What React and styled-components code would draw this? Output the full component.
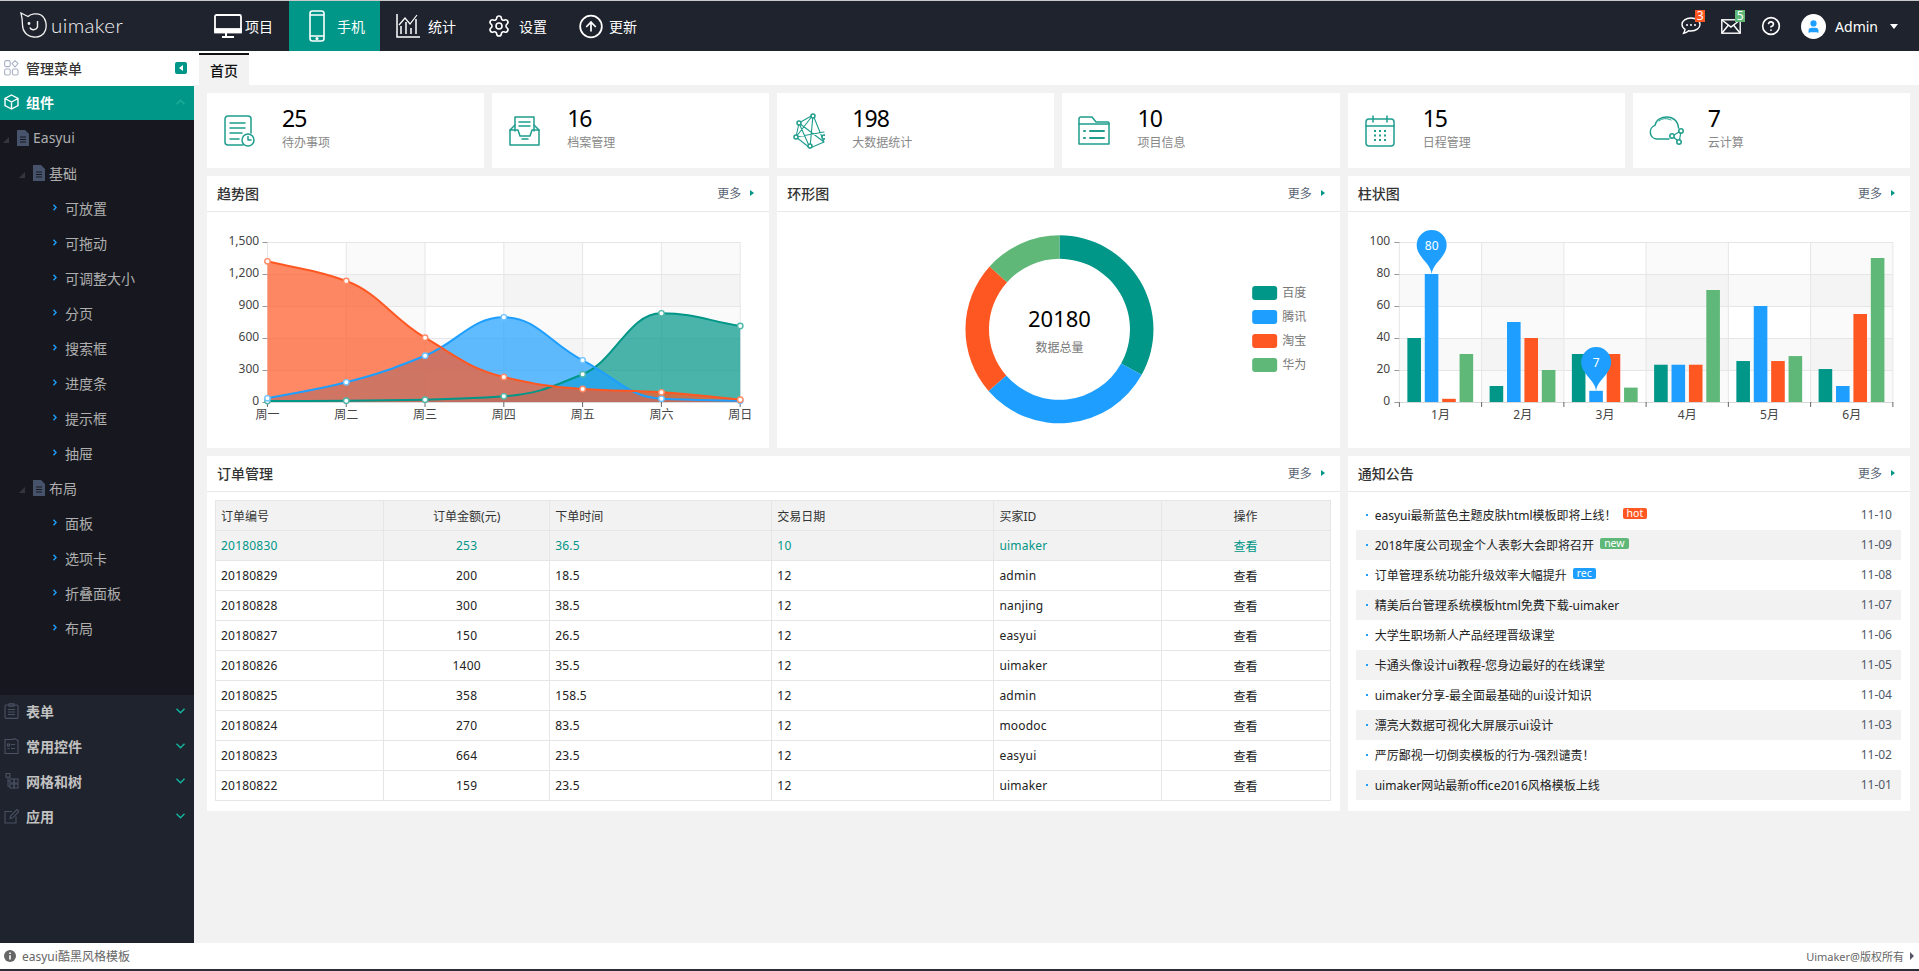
import React from 'react';
import styled, { createGlobalStyle } from 'styled-components';
import { Settings, CircleArrowUp, CircleHelp, User } from 'lucide-react';

const TEAL = '#009688', BLUE = '#1e9fff', ORANGE = '#ff5722', GREEN = '#5fb878';

const Global = createGlobalStyle`
  html, body { margin: 0; padding: 0; height: 100%; overflow: hidden; background: #f2f2f2; }
  #root { height: 100%; overflow: hidden; }
  * { box-sizing: border-box; }
  body { font-family: "Noto Sans", "Noto Sans CJK SC", sans-serif; font-size: 12px; color: #333; }
`;

const Page = styled.div`
  height: 971px; display: flex; flex-direction: column; border-top: 1px solid #c9c9c9; border-bottom: 2px solid #2a2e38;
`;
const TopBar = styled.header`
  height: 50px; flex: none; background: #1f232d; display: flex; align-items: stretch; color: #fff;
`;
const LogoArea = styled.div`
  width: 198px; flex: none; display: flex; align-items: center; padding: 0 0 2px 20px; gap: 3px;
`;
const LogoText = styled.span`
  font-family: Lato, sans-serif; font-weight: 300; font-size: 20.5px; letter-spacing: 0.4px; color: #f2f2f2;
`;
const Nav = styled.nav`display: flex;`;
const NavItem = styled.div`
  width: 91px; padding-left: 16px; display: flex; align-items: center; font-size: 14px; color: #fff;
  background: ${p => (p.$active ? TEAL : 'transparent')};
`;
const NavIcon = styled.span`
  width: ${p => p.$w}px; margin-right: ${p => p.$gap}px; flex: none; display: flex; justify-content: center;
`;
const TopRight = styled.div`margin-left: auto; display: flex; align-items: center; padding-right: 21px;`;
const TopIcon = styled.div`
  position: relative; width: 20px; height: 20px; margin-right: 20px; display: flex; align-items: center; justify-content: center;
`;
const Badge = styled.span`
  position: absolute; right: -4px; top: -6px; min-width: 10px; height: 12px; line-height: 12px; text-align: center;
  background: ${p => p.$bg}; color: #fff; font-size: 12px;
`;
const Avatar = styled.div`
  width: 25px; height: 25px; border-radius: 50%; background: #fff; display: flex; align-items: center; justify-content: center;
  margin-right: 9px;
`;
const AdminName = styled.span`font-size: 14px; color: #fff;`;
const Caret = styled.span`
  margin-left: 12px; width: 0; height: 0; border-left: 4px solid transparent; border-right: 4px solid transparent; border-top: 5px solid #fff;
`;

const Middle = styled.div`flex: 1; min-height: 0; display: flex;`;
const Sidebar = styled.aside`width: 194px; flex: none; background: #1f232d; display: flex; flex-direction: column;`;
const SideTitle = styled.div`
  height: 35px; flex: none; background: #fff; display: flex; align-items: center; padding: 0 7px 2px 4px;
  font-size: 14px; font-weight: 500; color: #333; gap: 7px;
`;
const Collapse = styled.span`
  margin-left: auto; width: 12px; height: 12px; border-radius: 2px; background: ${TEAL}; display: flex; align-items: center; justify-content: center;
  &::before { content: ""; border-right: 4px solid #fff; border-top: 3px solid transparent; border-bottom: 3px solid transparent; }
`;
const AccHead = styled.div`
  height: ${p => (p.$active ? 34 : 35)}px; flex: none; display: flex; align-items: center; padding: 0 9px 3px 4px; gap: 7px;
  font-size: 14px; font-weight: 700; color: ${p => (p.$active ? '#fff' : '#c2c2c2')};
  background: ${p => (p.$active ? TEAL : 'transparent')};
`;
const AccArrow = styled.svg`margin-left: auto; display: block;`;
const Tree = styled.div`height: 575px; flex: none; padding-top: 1.5px; background: #17181f; overflow: hidden;`;
const TreeRow = styled.div`
  height: 35px; display: flex; align-items: center; padding: 0 0 3px ${p => p.$indent}px; font-size: 14px; color: #aeaeae;
`;
const TreeTri = styled.span`
  width: 0; height: 0; margin-right: 8px; border-left: 6px solid transparent; border-bottom: 6px solid #34363d; margin-top: 4px;
`;
const DocIcon = styled.svg`margin-right: 4px; display: block;`;
const LeafArrow = styled.svg`margin-right: 8px; display: block;`;

const Main = styled.main`flex: 1; min-width: 0; display: flex; flex-direction: column;`;
const TabBar = styled.div`height: 34px; flex: none; background: #fff; padding: 2px 0 0 5px; display: flex;`;
const Tab = styled.div`
  width: 50px; border-top: 2px solid #111; background: #f2f2f2; display: flex; align-items: center; justify-content: center;
  font-size: 14px; font-weight: 500; color: #111;
`;
const Content = styled.div`
  flex: 1; padding: 8px 9px 0 13px; display: flex; flex-direction: column; gap: 8px;
`;
const StatRow = styled.div`display: grid; grid-template-columns: repeat(6, 1fr); gap: 8px;`;
const StatCard = styled.div`height: 75px; background: #fff; display: flex; align-items: center; padding-left: 16px;`;
const StatIcon = styled.div`width: 59px; flex: none; display: flex;`;
const StatNum = styled.div`font-size: 23px; height: 26px; line-height: 21px; letter-spacing: -1px; color: #000;`;
const StatLabel = styled.div`font-size: 12px; height: 20px; line-height: 18px; color: #888;`;
const ChartRow = styled.div`display: grid; grid-template-columns: repeat(3, 1fr); gap: 8px;`;
const Panel = styled.section`background: #fff; grid-column: span ${p => p.$span || 1};`;
const PanelHead = styled.div`
  height: 36px; border-bottom: 1px solid #e8e8e8; display: flex; align-items: center; padding: 0 15px 2px 10px;
`;
const PanelTitle = styled.h3`margin: 0; font-size: 14px; font-weight: 500; color: #333;`;
const More = styled.span`
  margin-left: auto; color: #5b6475; font-size: 12px; display: flex; align-items: center; gap: 9px;
  &::after { content: ""; border-left: 4px solid ${TEAL}; border-top: 3px solid transparent; border-bottom: 3px solid transparent; }
`;
const ChartSvg = styled.svg`
  display: block; width: 100%; height: 236px;
  text { font-family: "Noto Sans", "Noto Sans CJK SC", sans-serif; font-size: 12px; }
`;
const PanelBody = styled.div`padding: 8px 9px 10px 8px;`;
const OrderTable = styled.table`
  width: 100%; table-layout: fixed; border-collapse: collapse; font-size: 12px; color: #222;
`;
const Th = styled.th`
  height: 30px; padding: 0 5px; background: #f2f2f2; border: 1px solid #e6e6e6; font-weight: 400; color: #333;
  text-align: ${p => (p.$center ? 'center' : 'left')};
`;
const Td = styled.td`
  height: 30px; padding: 0 5px; border: 1px solid #e6e6e6; letter-spacing: 0.2px;
  text-align: ${p => (p.$center ? 'center' : 'left')};
  ${p => p.$hot && `background: #f2f2f2; color: ${TEAL};`}
`;
const NoticeList = styled.ul`list-style: none; margin: 0; padding: 0;`;
const NoticeItem = styled.li`
  height: 30px; display: flex; align-items: center; padding: 0 9px 1px 10px; color: #222;
  background: ${p => (p.$even ? '#f2f2f2' : '#fff')};
`;
const Dot = styled.i`width: 2px; height: 2px; background: ${BLUE}; margin-right: 7px; flex: none;`;
const Tag = styled.span`
  margin-left: 6px; height: 11px; line-height: 11px; padding: 0 4px; border-radius: 2px; font-size: 10.5px; color: #fff;
  background: ${p => p.$bg}; position: relative; top: -1px;
`;
const NoticeDate = styled.span`margin-left: auto; color: #4f5868;`;

const StatusBar = styled.footer`
  height: 26px; flex: none; background: #fff; display: flex; align-items: center; padding: 0 5px 0 4px; color: #666;
`;
const StatusLeft = styled.span`display: flex; align-items: center; gap: 6px;`;
const StatusRight = styled.span`margin-left: auto; display: flex; align-items: center; gap: 6px; color: #666; font-size: 11px;
  &::after { content: ""; border-left: 4px solid #556; border-top: 4px solid transparent; border-bottom: 4px solid transparent; }
`;

/* ---------- drawings ---------- */
const Logo = () => (
  <svg width="28" height="26" viewBox="0 0 28 26" fill="none" stroke="#f2f2f2" strokeWidth="1.3">
    <path d="M1 1 C3 2 6 3.5 8 4.5 C11 1.8 17 .8 21 3 C26 6 27 13 25.5 18 C24 23 19 25.5 14 25 C7 24.5 2.5 19.5 2.5 13 C2.5 9 2 5 1 1Z" />
    <path d="M10 15.5 C11 18.5 16 18.5 17.5 15 L17.5 9" strokeWidth="1.4" />
    <circle cx="9" cy="11.5" r=".8" fill="#f2f2f2" />
  </svg>
);
const IcoMonitor = () => (
  <svg width="28" height="24" viewBox="0 0 28 24" fill="none" stroke="#fff" strokeWidth="1.8">
    <rect x="1" y="1" width="26" height="17" rx="1.5" />
    <rect x="1" y="15" width="26" height="3.5" fill="#fff" />
    <path d="M12 19v3M8 23h12" strokeWidth="2" />
  </svg>
);
const IcoPhone = () => (
  <svg width="16" height="32" viewBox="0 0 16 32" fill="none" stroke="#fff" strokeWidth="1.6">
    <rect x="1" y="1" width="14" height="30" rx="2.5" />
    <path d="M1 5h14M1 26h14" />
    <circle cx="8" cy="28.5" r=".8" fill="#fff" />
  </svg>
);
const IcoStats = () => (
  <svg width="24" height="26" viewBox="0 0 24 26" fill="none" stroke="#fff" strokeWidth="1.5">
    <path d="M1 1v23h23" />
    <path d="M5 21v-8M10 21V9M15 21v-6M20 21V6" />
    <path d="M3 12l6-7 5 6 7-9" strokeWidth="1.2" />
  </svg>
);
const IcoChat = () => (
  <svg width="20" height="18" viewBox="0 0 20 18" fill="none" stroke="#fff" strokeWidth="1.4">
    <path d="M10 1C5 1 1 3.8 1 7.5c0 2 1.2 3.6 3 4.8-.2 1.4-.8 3-1.4 4 2-.4 3.8-1.4 5-2.5.8.1 1.6.2 2.4.2 5 0 9-2.8 9-6.5S15 1 10 1Z" />
    <circle cx="6" cy="8" r="1" fill="#fff" stroke="none" />
    <circle cx="10" cy="8" r="1" fill="#fff" stroke="none" />
    <circle cx="14" cy="8" r="1" fill="#fff" stroke="none" />
  </svg>
);
const IcoMail = () => (
  <svg width="20" height="15" viewBox="0 0 20 15" fill="none" stroke="#fff" strokeWidth="1.4">
    <rect x=".8" y=".8" width="18.4" height="13.4" />
    <path d="M1 1l9 7 9-7M1 14l6.5-8M19 14l-6.5-8" />
  </svg>
);
const SideGrid = () => (
  <svg width="15" height="16" viewBox="0 0 15 16" fill="none" stroke="#a9b1c4" strokeWidth="1.1">
    <rect x=".6" y=".6" width="5.6" height="6" rx="1.6" />
    <path d="M11 .6l3 3-3 3.4-3-3.4z" />
    <rect x=".6" y="9" width="5.6" height="6" rx="1.6" />
    <rect x="8.4" y="9" width="5.6" height="6" rx="1.6" />
  </svg>
);
const IcoBox = ({ c }) => (
  <svg width="15" height="16" viewBox="0 0 15 16" fill="none" stroke={c} strokeWidth="1.4">
    <path d="M7.5 1L14 4.5v7L7.5 15 1 11.5v-7zM1 4.5L7.5 8 14 4.5M7.5 8v7" />
  </svg>
);
const IcoClip = ({ c }) => (
  <svg width="15" height="16" viewBox="0 0 15 16" fill="none" stroke={c} strokeWidth="1.1">
    <rect x="1" y="2" width="13" height="13.4" rx="1" />
    <path d="M5 .8h5v2.4H5zM4 6.5h7M4 9h7M4 11.5h7" />
  </svg>
);
const IcoForm = ({ c }) => (
  <svg width="15" height="16" viewBox="0 0 15 16" fill="none" stroke={c} strokeWidth="1.1">
    <path d="M1 1.5h8l1.5-1 3.5 2v13H1z" />
    <path d="M3.5 6h2v2h-2zM3.5 10.5h2M7 6.5h4M7 10.5h4" />
  </svg>
);
const IcoTree = ({ c }) => (
  <svg width="15" height="16" viewBox="0 0 15 16" fill="none" stroke={c} strokeWidth="1.1">
    <rect x="2" y=".6" width="4" height="3.6" /><rect x="6" y="6" width="4" height="4" /><rect x="10" y="6" width="4" height="4" /><rect x="6" y="11" width="4" height="4" /><rect x="10" y="11" width="4" height="4" />
    <path d="M4 4.2v9h2M4 8h2" />
  </svg>
);
const IcoEdit = ({ c }) => (
  <svg width="15" height="16" viewBox="0 0 15 16" fill="none" stroke={c} strokeWidth="1.1">
    <path d="M12 8.5V15H1V3.5h7" />
    <path d="M6 10.5l.7-2.6L13 1.5 15 3.4 8.6 9.8z" />
  </svg>
);

const SI = ({ w = 32, h = 32, children }) => (
  <svg width={w} height={h} viewBox={`0 0 ${w} ${h}`} fill="none" stroke="#1f9d8d" strokeWidth="1.5" strokeLinecap="round" strokeLinejoin="round">{children}</svg>
);
const icons = [
  <SI key="a"><path d="M20 30H5a3 3 0 0 1-3-3V4a3 3 0 0 1 3-3h20a3 3 0 0 1 3 3v14" /><path d="M7 8h15M7 13h15M7 18h12M7 24h9" /><circle cx="25" cy="25" r="6" /><path d="M25 21.5V25h3" /></SI>,
  <SI key="b"><path d="M7 16V2h19v14" /><path d="M11 7h11M11 11h11" /><path d="M2 15l5-5M31 15l-5-5" /><path d="M2 15h8l2 6h10l2-6h7v15H2z" /><path d="M14 24h6" /></SI>,
  <SI key="c" h={36}><path d="M6 10L20 2l11 27-14 6-14-11zM6 10l-3 14M6 10l25 19M20 2L3 24M20 2l-3 33M3 24l28-5M6 10l11 25M20 2l11 27" strokeWidth="1.1" /><circle cx="6" cy="10" r="2" fill="#fff" /><circle cx="20" cy="3" r="2" fill="#fff" /><circle cx="3" cy="24" r="2" fill="#fff" /><circle cx="31" cy="24" r="2" fill="#fff" /><circle cx="17" cy="33" r="2" fill="#fff" /></SI>,
  <SI key="d" h={30}><path d="M1 27V3a2 2 0 0 1 2-2h11l4 5h12a1 1 0 0 1 1 1v21H1z" /><path d="M1 8h30" /><path d="M12 15h14M12 22h14M6 15h1M6 22h1" strokeWidth="2" /></SI>,
  <SI key="e"><rect x="2" y="4" width="28" height="27" rx="3" /><path d="M2 11h28M9 1v6M23 1v6" /><path d="M10 16h2M15 16h2M20 16h2M10 20.5h2M15 20.5h2M20 20.5h2M10 25h2M15 25h2M20 25h2" strokeWidth="2.2" strokeLinecap="butt" /></SI>,
  <SI key="f" w={36} h={30}><path d="M20 23H8a7 7 0 0 1-2-13.6C7 4 12 1 18 1c6 0 11 4 11.5 11" /><path d="M10 5c3-3 8-3 12-1" strokeWidth="1" /><circle cx="23" cy="20" r="2.2" /><circle cx="32" cy="15" r="2.2" /><circle cx="30" cy="26" r="2.2" /><path d="M25 19l5-3M25 21.5l3.5 3M31.7 17l-1.2 7" strokeWidth="1.2" /></SI>,
];

function monotone(pts) {
  const n = pts.length;
  const d = [];
  for (let i = 0; i < n - 1; i++) d.push((pts[i + 1][1] - pts[i][1]) / (pts[i + 1][0] - pts[i][0]));
  const m = pts.map((_, i) => {
    if (i === 0) return d[0];
    if (i === n - 1) return d[n - 2];
    if (d[i - 1] * d[i] <= 0) return 0;
    return (2 * d[i - 1] * d[i]) / (d[i - 1] + d[i]);
  });
  let s = `M${pts[0][0]} ${pts[0][1]}`;
  for (let i = 0; i < n - 1; i++) {
    const h = (pts[i + 1][0] - pts[i][0]) * 0.42;
    s += `C${pts[i][0] + h} ${pts[i][1] + m[i] * h} ${pts[i + 1][0] - h} ${pts[i + 1][1] - m[i + 1] * h} ${pts[i + 1][0]} ${pts[i + 1][1]}`;
  }
  return s;
}

const Bands = ({ x0, x1, cols }) => {
  const w = (x1 - x0) / cols;
  return (
    <g>
      {[1, 3].map(r => <rect key={r} x={x0} y={242 + r * 32} width={x1 - x0} height={32} fill="rgba(0,0,0,.025)" />)}
      {Array.from({ length: cols }).map((_, i) => i % 2 === 1 && <rect key={i} x={x0 + i * w} y={242} width={w} height={160} fill="rgba(0,0,0,.02)" />)}
      {[0, 1, 2, 3, 4].map(r => <path key={r} d={`M${x0} ${242.5 + r * 32}H${x1}`} stroke="#e6e6e6" />)}
      {Array.from({ length: cols + 1 }).map((_, i) => <path key={i} d={`M${x0 + i * w} 242V402`} stroke="#e6e6e6" />)}
      <path d={`M${x0} 402.5H${x1}`} stroke="#d8d8d8" />
      {Array.from({ length: cols + 1 }).map((_, i) => <path key={i} d={`M${x0 + i * w} 402V407`} stroke="#666" />)}
      {[0, 1, 2, 3, 4, 5].map(r => <path key={r} d={`M${x0 - 5} ${242.5 + r * 32}H${x0}`} stroke="#999" />)}
    </g>
  );
};

const LX0 = 267.3, LW = 78.8;
const lineSeries = [
  { c: TEAL, ring: '#4fb8a9', ys: [401, 400.7, 399.7, 396.3, 374.3, 313.3, 326] },
  { c: BLUE, ring: '#6fc2ff', ys: [398.3, 382.3, 355.7, 317.3, 360.3, 398.7, 400.7] },
  { c: ORANGE, ring: '#ff8a65', ys: [261.3, 281, 337.7, 377, 389, 392.3, 399.7] },
].map(s => ({ ...s, pts: s.ys.map((y, i) => [LX0 + i * LW, y]) }));
const Axis = ({ x, y, anchor = 'end', children }) => (
  <text x={x} y={y} textAnchor={anchor} dominantBaseline="central" fill="#444">{children}</text>
);
const LineChart = () => (
  <ChartSvg viewBox="207 212 562 236">
    <Bands x0={LX0} x1={740} cols={6} />
    {['1,500', '1,200', '900', '600', '300', '0'].map((t, i) => <Axis key={t} x={259} y={240 + i * 32}>{t}</Axis>)}
    {['周一', '周二', '周三', '周四', '周五', '周六', '周日'].map((t, i) => <Axis key={t} x={LX0 + i * LW} y={414} anchor="middle">{t}</Axis>)}
    {lineSeries.map(s => (
      <path key={s.c} d={`${monotone(s.pts)}L${s.pts[6][0]} 402L${s.pts[0][0]} 402Z`} fill={s.c} fillOpacity=".7" />
    ))}
    {lineSeries.map(s => <path key={s.c} d={monotone(s.pts)} fill="none" stroke={s.c} strokeWidth="2" />)}
    {lineSeries.map(s => s.pts.map(([x, y]) => <circle key={s.c + x} cx={x} cy={y} r="2.7" fill="#fff" stroke={s.ring} strokeWidth="1.4" />))}
  </ChartSvg>
);

const arc = (cx, cy, r0, r1, a0, a1) => {
  const p = (r, a) => [cx + r * Math.sin(a * Math.PI / 180), cy - r * Math.cos(a * Math.PI / 180)];
  const [x0, y0] = p(r1, a0), [x1, y1] = p(r1, a1), [x2, y2] = p(r0, a1), [x3, y3] = p(r0, a0);
  const large = a1 - a0 > 180 ? 1 : 0;
  return `M${x0} ${y0}A${r1} ${r1} 0 ${large} 1 ${x1} ${y1}L${x2} ${y2}A${r0} ${r0} 0 ${large} 0 ${x3} ${y3}Z`;
};
const donut = [
  { c: TEAL, a: 0, b: 119, t: '百度' }, { c: BLUE, a: 119, b: 229, t: '腾讯' },
  { c: ORANGE, a: 229, b: 312, t: '淘宝' }, { c: GREEN, a: 312, b: 360, t: '华为' },
];
const DonutChart = () => (
  <ChartSvg viewBox="777 212 562 236">
    {donut.map(s => <path key={s.t} d={arc(1059.3, 329.3, 70.5, 94, s.a, s.b)} fill={s.c} />)}
    <text x="1059.3" y="318" textAnchor="middle" dominantBaseline="central" fill="#000" style={{ fontSize: 22 }}>20180</text>
    <text x="1059.3" y="347" textAnchor="middle" dominantBaseline="central" fill="#777">数据总量</text>
    {donut.map((s, i) => (
      <g key={s.t}>
        <rect x="1252" y={286 + i * 24} width="25" height="14" rx="3" fill={s.c} />
        <text x="1282" y={292 + i * 24} dominantBaseline="central" fill="#777">{s.t}</text>
      </g>
    ))}
  </ChartSvg>
);

const BX0 = 1399.2, BCOL = 82.25;
const barData = [[40, 80, 2, 30], [10, 50, 40, 20], [30, 7, 30, 9], [23.3, 23.3, 23.3, 70], [25.6, 60, 25.6, 28.7], [20.6, 10, 55, 90]];
const barColors = [TEAL, BLUE, ORANGE, GREEN];
const Pin = ({ cx, cy, tip, v }) => (
  <g>
    <path d={`M${cx} ${tip}C${cx - 1} ${tip - 11} ${cx - 15} ${cy + 12} ${cx - 15} ${cy}A15 15 0 1 1 ${cx + 15} ${cy}C${cx + 15} ${cy + 12} ${cx + 1} ${tip - 11} ${cx} ${tip}Z`} fill={BLUE} />
    <text x={cx} y={cy + .5} textAnchor="middle" dominantBaseline="central" fill="#fff">{v}</text>
  </g>
);
const BarChart = () => (
  <ChartSvg viewBox="1348 212 562 236">
    <Bands x0={BX0} x1={1892.7} cols={6} />
    {['100', '80', '60', '40', '20', '0'].map((t, i) => <Axis key={t} x={1390} y={240 + i * 32}>{t}</Axis>)}
    {['1月', '2月', '3月', '4月', '5月', '6月'].map((t, i) => <Axis key={t} x={BX0 + (i + .5) * BCOL} y={414} anchor="middle">{t}</Axis>)}
    {barData.map((g, i) => g.map((v, j) => (
      <rect key={`${i}-${j}`} x={BX0 + i * BCOL + 8 + j * 17.4} y={402 - v * 1.6} width="13.6" height={v * 1.6} fill={barColors[j]} />
    )))}
    <Pin cx={1431.5} cy={245} tip={274} v="80" />
    <Pin cx={1596} cy={362} tip={391} v="7" />
  </ChartSvg>
);

/* ---------- data ---------- */
const navItems = [
  { t: '项目', w: 28, gap: 3, icon: <IcoMonitor /> },
  { t: '手机', w: 24, gap: 8, icon: <IcoPhone />, active: true },
  { t: '统计', w: 24, gap: 8, icon: <IcoStats /> },
  { t: '设置', w: 24, gap: 8, icon: <Settings size={24} strokeWidth={1.6} color="#fff" /> },
  { t: '更新', w: 26, gap: 5, icon: <CircleArrowUp size={27} strokeWidth={1.6} color="#fff" /> },
];
const stats = [[25, '待办事项'], [16, '档案管理'], [198, '大数据统计'], [10, '项目信息'], [15, '日程管理'], [7, '云计算']];
const tree = [
  ['d0', 'Easyui'], ['d1', '基础'], ['l', '可放置'], ['l', '可拖动'], ['l', '可调整大小'], ['l', '分页'], ['l', '搜索框'], ['l', '进度条'], ['l', '提示框'], ['l', '抽屉'],
  ['d1', '布局'], ['l', '面板'], ['l', '选项卡'], ['l', '折叠面板'], ['l', '布局'],
];
const orders = [
  ['20180830', '253', '36.5', '10', 'uimaker'], ['20180829', '200', '18.5', '12', 'admin'], ['20180828', '300', '38.5', '12', 'nanjing'],
  ['20180827', '150', '26.5', '12', 'easyui'], ['20180826', '1400', '35.5', '12', 'uimaker'], ['20180825', '358', '158.5', '12', 'admin'],
  ['20180824', '270', '83.5', '12', 'moodoc'], ['20180823', '664', '23.5', '12', 'easyui'], ['20180822', '159', '23.5', '12', 'uimaker'],
];
const notices = [
  ['easyui最新蓝色主题皮肤html模板即将上线！', '11-10', 'hot', ORANGE], ['2018年度公司现金个人表彰大会即将召开', '11-09', 'new', GREEN],
  ['订单管理系统功能升级效率大幅提升', '11-08', 'rec', BLUE], ['精美后台管理系统模板html免费下载-uimaker', '11-07'],
  ['大学生职场新人产品经理晋级课堂', '11-06'], ['卡通头像设计ui教程-您身边最好的在线课堂', '11-05'], ['uimaker分享-最全面最基础的ui设计知识', '11-04'],
  ['漂亮大数据可视化大屏展示ui设计', '11-03'], ['严厉鄙视一切倒卖模板的行为-强烈谴责！', '11-02'], ['uimaker网站最新office2016风格模板上线', '11-01'],
];
const colWidths = [168, 166, 222, 222, 167, 169];

const Doc = () => (
  <DocIcon width="12" height="16" viewBox="0 0 12 16">
    <path d="M0 0h8l4 4v12H0z" fill="#47526b" />
    <path d="M3 7h6M3 9.5h6M3 12h6" stroke="#17181f" strokeWidth="1" />
  </DocIcon>
);
const Chevron = ({ up }) => (
  <AccArrow width="9" height="6" viewBox="0 0 9 6" fill="none" stroke={up ? '#1aae9c' : '#12b5a2'} strokeWidth="1.4">
    <path d={up ? 'M.5 5.3l4-4 4 4' : 'M.5.7l4 4 4-4'} />
  </AccArrow>
);
const accs = [['表单', IcoClip], ['常用控件', IcoForm], ['网格和树', IcoTree], ['应用', IcoEdit]];

export default function App() {
  return (
    <Page>
      <Global />
      <TopBar>
        <LogoArea><Logo /><LogoText>uimaker</LogoText></LogoArea>
        <Nav>
          {navItems.map(n => (
            <NavItem key={n.t} $active={n.active}><NavIcon $w={n.w} $gap={n.gap}>{n.icon}</NavIcon>{n.t}</NavItem>
          ))}
        </Nav>
        <TopRight>
          <TopIcon><IcoChat /><Badge $bg={ORANGE}>3</Badge></TopIcon>
          <TopIcon><IcoMail /><Badge $bg={GREEN}>5</Badge></TopIcon>
          <TopIcon><CircleHelp size={20} strokeWidth={2} color="#fff" /></TopIcon>
          <Avatar><User size={15} color={BLUE} fill={BLUE} /></Avatar>
          <AdminName>Admin</AdminName>
          <Caret />
        </TopRight>
      </TopBar>
      <Middle>
        <Sidebar>
          <SideTitle><SideGrid />管理菜单<Collapse /></SideTitle>
          <AccHead $active><IcoBox c="#fff" />组件<Chevron up /></AccHead>
          <Tree>
            {tree.map(([k, t], i) => k === 'l' ? (
              <TreeRow key={i} $indent={53}>
                <LeafArrow width="4" height="7" viewBox="0 0 4 7" fill="none" stroke={BLUE} strokeWidth="1.4"><path d="M.5.7l2.6 2.8-2.6 2.8" /></LeafArrow>{t}
              </TreeRow>
            ) : (
              <TreeRow key={i} $indent={k === 'd0' ? 3 : 19}><TreeTri /><Doc />{t}</TreeRow>
            ))}
          </Tree>
          {accs.map(([t, I]) => <AccHead key={t}><I c="#4a5163" />{t}<Chevron /></AccHead>)}
        </Sidebar>
        <Main>
          <TabBar><Tab>首页</Tab></TabBar>
          <Content>
            <StatRow>
              {stats.map(([n, l], i) => (
                <StatCard key={l}>
                  <StatIcon>{icons[i]}</StatIcon>
                  <div><StatNum>{n}</StatNum><StatLabel>{l}</StatLabel></div>
                </StatCard>
              ))}
            </StatRow>
            <ChartRow>
              <Panel><PanelHead><PanelTitle>趋势图</PanelTitle><More>更多</More></PanelHead><LineChart /></Panel>
              <Panel><PanelHead><PanelTitle>环形图</PanelTitle><More>更多</More></PanelHead><DonutChart /></Panel>
              <Panel><PanelHead><PanelTitle>柱状图</PanelTitle><More>更多</More></PanelHead><BarChart /></Panel>
            </ChartRow>
            <ChartRow>
              <Panel $span={2}>
                <PanelHead><PanelTitle>订单管理</PanelTitle><More>更多</More></PanelHead>
                <PanelBody>
                  <OrderTable>
                    <colgroup>{colWidths.map((w, i) => <col key={i} style={{ width: w }} />)}</colgroup>
                    <thead>
                      <tr><Th>订单编号</Th><Th $center>订单金额(元)</Th><Th>下单时间</Th><Th>交易日期</Th><Th>买家ID</Th><Th $center>操作</Th></tr>
                    </thead>
                    <tbody>
                      {orders.map((r, i) => (
                        <tr key={r[0]}>
                          <Td $hot={i === 0}>{r[0]}</Td><Td $hot={i === 0} $center>{r[1]}</Td><Td $hot={i === 0}>{r[2]}</Td>
                          <Td $hot={i === 0}>{r[3]}</Td><Td $hot={i === 0}>{r[4]}</Td><Td $hot={i === 0} $center>查看</Td>
                        </tr>
                      ))}
                    </tbody>
                  </OrderTable>
                </PanelBody>
              </Panel>
              <Panel>
                <PanelHead><PanelTitle>通知公告</PanelTitle><More>更多</More></PanelHead>
                <PanelBody>
                  <NoticeList>
                    {notices.map(([t, d, tag, bg], i) => (
                      <NoticeItem key={d} $even={i % 2 === 1}>
                        <Dot />{t}{tag && <Tag $bg={bg}>{tag}</Tag>}<NoticeDate>{d}</NoticeDate>
                      </NoticeItem>
                    ))}
                  </NoticeList>
                </PanelBody>
              </Panel>
            </ChartRow>
          </Content>
        </Main>
      </Middle>
      <StatusBar>
        <StatusLeft>
          <svg width="12" height="12" viewBox="0 0 12 12"><circle cx="6" cy="6" r="6" fill="#666" /><path d="M6 2.4v1.5M6 5.2v4.2" stroke="#fff" strokeWidth="1.6" /></svg>
          easyui酷黑风格模板
        </StatusLeft>
        <StatusRight>Uimaker@版权所有</StatusRight>
      </StatusBar>
    </Page>
  );
}
